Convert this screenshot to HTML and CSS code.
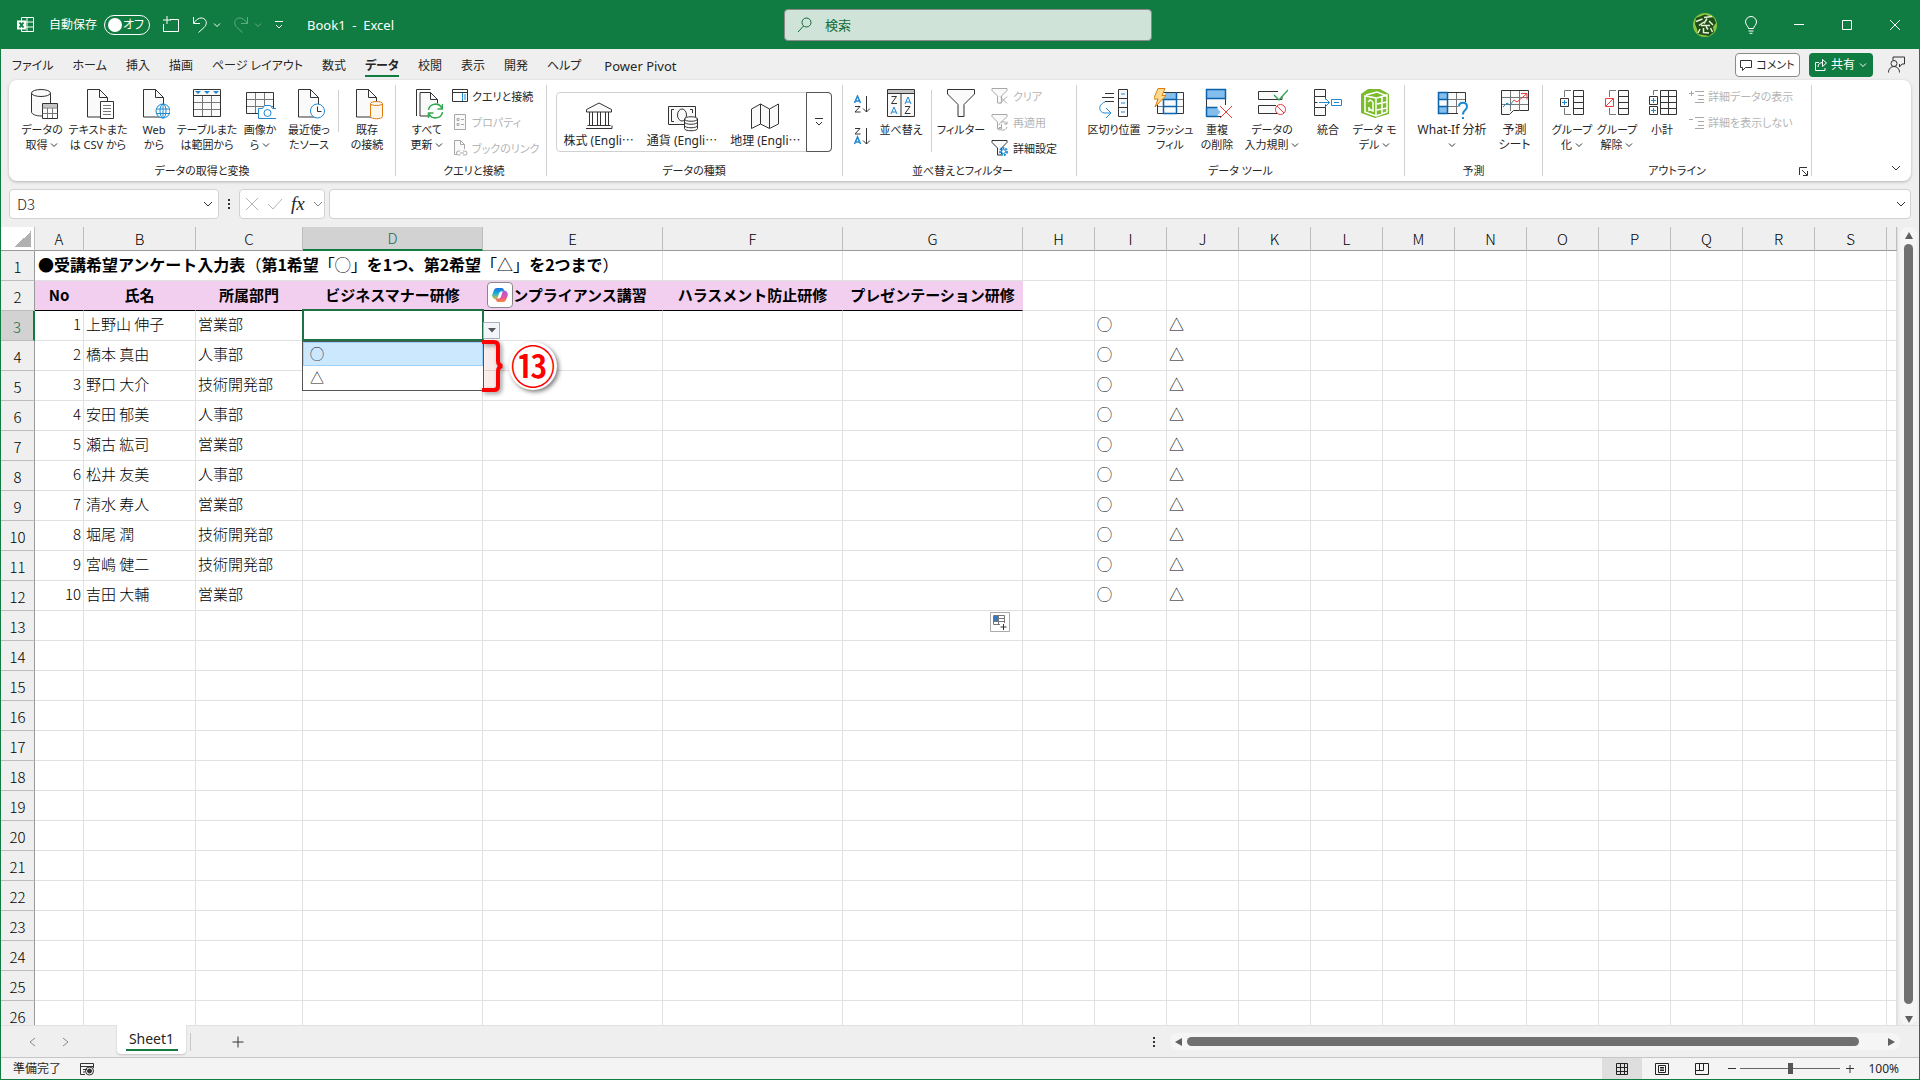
FILE: index.html
```
<!DOCTYPE html>
<html lang="ja">
<head>
  <meta charset="UTF-8">
  <title>Book1 - Excel</title>
  <link rel="stylesheet" href="styles.css">
</head>
<body>

<svg class="sprite" aria-hidden="true">
  <symbol id="chev" viewBox="0 0 8 6"><path d="M1 1.500l3 3 3-3"/></symbol>
  <symbol id="page" viewBox="0 0 32 32"><path class="paper" d="M5.500 1.500h12l8 8v19.500h-20z"/><path d="M17.500 1.500v8h8"/></symbol>
  <symbol id="funnel" viewBox="0 0 18 18"><path class="paper" d="M1 1.500h15v2l-5.500 5.500v7h-4v-7l-5.500-5.500z"/></symbol>
</svg>

<div class="window">

  <header class="titlebar">
    <div class="title-left">
      <svg class="app-icon" width="18" height="18" viewBox="0 0 18 18"><path class="w" d="M4.500 1.500h12v14h-12zM10 1.500v14M4.500 6h12M4.500 11h12"/><path class="wf" d="M0 4.500h9v9H0z"/><path class="g" d="M2.500 6.500l4 5M6.500 6.500l-4 5"/></svg>
      <label class="autosave">自動保存 <span class="switch"><input type="checkbox" role="switch"><i></i><b>オフ</b></span></label>
      <button class="tbtn save" aria-label="保存"><svg width="18" height="18" viewBox="0 0 18 18"><path class="w" d="M8 3.500h8.500v12h-15V8M5 0v8M1 4h8"/></svg></button>
      <button class="tbtn" aria-label="元に戻す"><svg width="16" height="18" viewBox="0 0 16 18"><path class="w" d="M1.500 1v6.500h6.500M2 7c3-5 8-6.500 11-3.500 2.500 3 1 6-1 8l-5.500 5"/></svg><svg class="chev" width="8" height="6"><use href="#chev"/></svg></button>
      <button class="tbtn dim" aria-label="やり直し"><svg width="16" height="18" viewBox="0 0 16 18"><path class="w" d="M14.500 1v6.500h-6.500M14 7c-3-5-8-6.500-11-3.500-2.500 3-1 6 1 8l5.500 5"/></svg><svg class="chev" width="8" height="6"><use href="#chev"/></svg></button>
      <button class="tbtn" aria-label="クイック アクセス"><svg width="10" height="10" viewBox="0 0 10 10"><path class="w" d="M1 1.500h8M2 5l3 3 3-3"/></svg></button>
      <span class="doc-name">Book1&nbsp; -&nbsp; Excel</span>
    </div>
    <div class="search">
      <svg width="16" height="16" viewBox="0 0 16 16"><circle cx="9.500" cy="5.500" r="4.500"/><path d="M6.500 9L1 15"/></svg>
      <input type="text" placeholder="検索" aria-label="検索">
    </div>
    <div class="title-right">
      <svg class="avatar" width="24" height="24" viewBox="0 0 24 24"><circle cx="12" cy="12" r="12" fill="#8cc63f"/><path d="M3 5l9-3.500L21 5l2 5-3 4 1 5-5 4-6-1-5-1-1-5-2-5z" fill="#1f4d1a"/><path d="M3 8.500L9.500 6M11 4.500l8-1M11 9l-5 3.500M8 12.500h9M14 5.500l-3 5M16 8l4 4M7 16l-2 4M10.500 15v4.500l5.500.5M13 13.500l2 3M17.500 15l2 4" fill="none" stroke="#e6f2d8" stroke-width="1.500"/></svg>
      <button aria-label="ヒント"><svg width="14" height="18" viewBox="0 0 14 18"><path class="w" d="M4.500 12.500c0-2-3-3.500-3-6.500a5.500 5.500 0 0 1 11 0c0 3-3 4.500-3 6.500zM4.500 15h5M5.500 17.300h3"/></svg></button>
      <button aria-label="最小化"><svg width="12" height="12" viewBox="0 0 12 12"><path class="w" d="M1 5.500h10"/></svg></button>
      <button aria-label="最大化"><svg width="12" height="12" viewBox="0 0 12 12"><path class="w" d="M1.500 1.500h9v9h-9z"/></svg></button>
      <button aria-label="閉じる"><svg width="12" height="12" viewBox="0 0 12 12"><path class="w" d="M1 1l10 10M11 1L1 11"/></svg></button>
    </div>
  </header>

  <nav class="tabs">
    <a href="#">ファイル</a>
    <a href="#">ホーム</a>
    <a href="#">挿入</a>
    <a href="#">描画</a>
    <a href="#">ページ レイアウト</a>
    <a href="#">数式</a>
    <a href="#" class="active">データ</a>
    <a href="#">校閲</a>
    <a href="#">表示</a>
    <a href="#">開発</a>
    <a href="#">ヘルプ</a>
    <a href="#" class="latin">Power Pivot</a>
    <div class="tabs-right">
      <button class="comment"><svg width="12" height="12" viewBox="0 0 12 12"><path d="M.5 1.500h11v7h-6l-3 3v-3h-2z"/></svg>コメント</button>
      <button class="share"><svg width="12" height="12" viewBox="0 0 12 12"><path d="M4 3.500H.5v8h9.500V9M3 8c0-3 2-4.500 5-4.500M7.500.5l4 3.500-4 3.500z"/></svg>共有<svg class="chev" width="8" height="6"><use href="#chev"/></svg></button>
      <button class="person" aria-label="プレゼンス"><svg width="17" height="17" viewBox="0 0 17 17"><path d="M5 4.500V1h11.500v7H14l-2.500 3V8"/><circle cx="6" cy="7.500" r="3"/><path d="M.5 16.500c0-8 11-8 11 0"/></svg></button>
    </div>
  </nav>

  <section class="ribbon">
    <div class="group get-data">
      <div class="tools">
        <button class="tool"><svg class="ico" viewBox="0 0 32 32"><path class="paper" d="M5.500 5v19c0 2 4 4 10 4h9V5"/><ellipse class="paper" cx="15" cy="5" rx="9.500" ry="3.500"/><path class="white" d="M16.500 15.500h15v15h-15z"/><path class="greyf" d="M17 16h14v3.500h-14z"/><path class="thin" d="M16.500 20h15M16.500 25.500h15M21.500 20v10M26.500 20v10"/></svg>データの<br>取得 <svg class="chev" width="8" height="6"><use href="#chev"/></svg></button>
        <button class="tool"><svg class="ico" viewBox="0 0 32 32"><use href="#page"/><path class="white" d="M18.500 13.500h13v17h-13z"/><path class="thin" d="M21 17.500h8M21 20.500h8M21 23.500h8M21 26.500h8"/></svg>テキストまた<br>は CSV から</button>
        <button class="tool"><svg class="ico" viewBox="0 0 32 32"><use href="#page"/><circle class="wblue" cx="25" cy="23" r="7"/><ellipse class="blue" cx="25" cy="23" rx="3" ry="7"/><path class="blue" d="M18 21h14M18 25.500h14M25 16v14"/></svg>Web<br>から</button>
        <button class="tool"><svg class="ico" viewBox="0 0 32 32"><path class="paper" d="M2.500 1.500h27v27h-27z"/><path class="thin" d="M11.500 7v21M20.500 7v21M3 14.500h26M3 21.500h26"/><path d="M2.500 7.500h27"/><path class="bluef" d="M4 3h6l-3 3zM13 3h6l-3 3zM22 3h6l-3 3z"/></svg>テーブルまた<br>は範囲から</button>
        <button class="tool"><svg class="ico" viewBox="0 0 32 32"><path class="paper" d="M2.500 4.500h27v21h-27z"/><path class="thin" d="M11.500 5v20M20.500 5v20M3 11.500h26M3 18.500h26"/><path class="wblue" d="M14.500 20.500h4l2-3h6l2 3h4v10h-18z"/><circle class="blue" cx="23.500" cy="25" r="3.500"/></svg>画像か<br>ら <svg class="chev" width="8" height="6"><use href="#chev"/></svg></button>
        <button class="tool"><svg class="ico" viewBox="0 0 32 32"><use href="#page"/><circle class="wblue" cx="24.500" cy="23" r="7"/><path d="M24.500 18.500v5h4"/></svg>最近使っ<br>たソース</button>
        <i class="bar"></i>
        <button class="tool"><svg class="ico" viewBox="0 0 32 32"><use href="#page"/><path class="orange" d="M19.500 16v12.500c0 3 12 3 12 0V16"/><ellipse class="orange" cx="25.500" cy="15.500" rx="6" ry="2"/></svg>既存<br>の接続</button>
      </div>
      <h2>データの取得と変換</h2>
    </div>

    <div class="group queries">
      <div class="tools">
        <button class="tool"><svg class="ico" viewBox="0 0 32 32"><path d="M5.500 28V1.500h14"/><path class="paper" d="M9 4.500h10.500l7 7V28H9z"/><path d="M19.500 4.500v7h7"/><circle cx="24.500" cy="23" r="8" class="nos"/><path class="green" d="M17.500 22c1-7 11-8 13.500-1.500M31.500 16v5h-5M31.500 24c-1 7-11 8-13.500 1.500M17.500 30v-5h5"/></svg>すべて<br>更新 <svg class="chev" width="8" height="6"><use href="#chev"/></svg></button>
        <div class="stack">
          <button><svg width="16" height="16" viewBox="0 0 16 16"><path class="white" d="M.5 1.500h15v12H.5zM.5 4.500h15"/><path class="blue" d="M10.500 5v8M12 7h2M12 9h2M12 11h2"/></svg>クエリと接続</button>
          <button disabled><svg width="16" height="16" viewBox="0 0 16 16"><path class="paper" d="M2.500.5h11v15h-11z"/><path d="M5 4.500h2v2H5zM9 5.500h3M5 9.500h2v2H5zM9 10.500h3"/></svg>プロパティ</button>
          <button disabled><svg width="16" height="16" viewBox="0 0 16 16"><path class="paper" d="M5 14.500H2.500V.5h6l4 4V9M8.500.5v4h4"/><path d="M8 11H6.500a2 2 0 0 0 0 4h2M11 11h2a2 2 0 0 1 0 4h-2M8 13h4"/></svg>ブックのリンク</button>
        </div>
      </div>
      <h2>クエリと接続</h2>
    </div>

    <div class="group types">
      <div class="tools">
        <div class="gallery">
          <button><svg class="ico" viewBox="0 0 32 32"><path class="paper" d="M3.500 11v-2.500L16 2l12.500 6.500V11zM4.500 24.500h23M3 27.500h26v-3"/><path d="M6.500 11v13M9.500 11v13M14.500 11v13M17.500 11v13M22.500 11v13M25.500 11v13"/></svg>株式 (Engli⋯</button>
          <button><svg class="ico" viewBox="0 0 32 32"><path class="paper" d="M2.500 5.500h27v18h-27z"/><path d="M8 8.500H5.500v12H8M24 8.500h2.500V12"/><ellipse cx="16" cy="14" rx="4.500" ry="6"/><path class="white" d="M18.500 18v9.500c0 3 13 3 13 0V18c0-3-13-3-13 0M18.500 18c0 3 13 3 13 0M18.500 21c0 3 13 3 13 0M18.500 24.500c0 3 13 3 13 0"/></svg>通貨 (Engli⋯</button>
          <button><svg class="ico" viewBox="0 0 32 32"><path class="paper" d="M2.500 8l9-5 9 5 9-5v20l-9 4.500-9-4.500-9 4.500zM11.500 3v20M20.500 8v19"/></svg>地理 (Engli⋯</button>
          <button class="more" aria-label="その他"><svg width="8" height="10" viewBox="0 0 8 10"><path d="M0 1.500h8M1 5l3 3 3-3"/></svg></button>
        </div>
      </div>
      <h2>データの種類</h2>
    </div>

    <div class="group sorting">
      <div class="tools">
        <div class="sorts">
          <button aria-label="昇順"><svg width="18" height="18" viewBox="0 0 18 18"><path class="blue b2" d="M1.500 8l3-7 3 7M2.500 6h4"/><path d="M2 11.500h5L2 17h5.500M13.500 1v16M10 13.500l3.500 3.500 3.500-3.500"/></svg></button>
          <button aria-label="降順"><svg width="18" height="18" viewBox="0 0 18 18"><path class="blue b2" d="M1.500 17l3-7 3 7M2.500 15h4"/><path d="M2 1.500h5L2 7h5.500M13.500 1v16M10 13.500l3.500 3.500 3.500-3.500"/></svg></button>
        </div>
        <button class="tool"><svg class="ico" viewBox="0 0 32 32"><path class="paper" d="M2.500 1.500h27v27h-27z"/><path class="greyf" d="M3 2h26v3.500H3z"/><path d="M2.500 5.500h27M16 5.500v23M6.500 8.500h5l-5 7h5.500M20 18.500h5l-5 7h5.500"/><path class="blue" d="M6 26l3-7 3 7M7 24h4M20 16l3-7 3 7M21 14h4"/></svg>並べ替え</button>
        <i class="bar long"></i>
        <button class="tool"><svg class="ico" viewBox="0 0 32 32"><path class="paper" d="M2.500 1.500h27V6L19 16.500v12h-6v-12L2.500 6z"/></svg>フィルター</button>
        <div class="stack">
          <button disabled><svg width="18" height="18" viewBox="0 0 18 18"><use href="#funnel"/><path d="M9 9.500l7 7M16 9.500l-7 7"/></svg>クリア</button>
          <button disabled><svg width="18" height="18" viewBox="0 0 18 18"><use href="#funnel"/><path class="white" d="M8 12c1-4 7-4 8-1V8.500M16 11h-3M16 14c-1 4-7 4-8 1v2.500M8 14.500h3"/></svg>再適用</button>
          <button><svg width="18" height="18" viewBox="0 0 18 18"><use href="#funnel"/><circle class="gear" cx="12.500" cy="12.500" r="3.500"/><circle class="wblue" cx="12.500" cy="12.500" r="2"/></svg>詳細設定</button>
        </div>
      </div>
      <h2>並べ替えとフィルター</h2>
    </div>

    <div class="group datatools">
      <div class="tools">
        <button class="tool"><svg class="ico" viewBox="0 0 32 32"><path class="paper" d="M20.500 1.500h9v27h-9zM20.500 10.500h9M20.500 19.500h9"/><path d="M7 5.500h9M4 9.500h12M7 13.500h9"/><path class="blue" d="M7 14c-8 3-6 11 0 11h5M8 20l5 5-5 5M23 6h4M23 15h4M23 24h4"/></svg>区切り位置</button>
        <button class="tool"><svg class="ico" viewBox="0 0 32 32"><path class="paper" d="M3.500 4.500h26v21h-26z"/><path class="thin" d="M22.500 5v20M4 11.500h25M4 18.500h25"/><path class="bfill" d="M11.500 5h11v6.500h-13z"/><path class="dblue" d="M9.500 11.500h13v14h-13zM9.500 18.500h13M22.500 4.500v7"/><path class="bolt" d="M4 .5h7l-3 7h4L1 19l3-8H-.5z"/></svg>フラッシュ<br>フィル</button>
        <button class="tool"><svg class="ico" viewBox="0 0 32 32"><path class="paper" d="M5.500 1.500h19v27h-19z"/><path class="bfill" d="M5.500 1.500h19v9h-19zM5.500 19.500h10l4 4.500-4 4.500h-10z"/><path class="dblue" d="M5.500 1.500h19v9h-19zM5.500 28.500v-9h11M5.500 28.500h12"/><path class="nos" d="M21 17h12v13H21z"/><path class="red" d="M19 18l12 12M31 18L19 30"/></svg>重複<br>の削除</button>
        <button class="tool"><svg class="ico" viewBox="0 0 32 32"><path class="paper" d="M22 3.500H2.500v8H26V8M20 17.500H2.500v8H22"/><path class="green" d="M18 7l5 5 9-10"/><circle class="red wf" cx="24.500" cy="21.500" r="5"/><path class="red" d="M21 18l7 7"/></svg>データの<br>入力規則 <svg class="chev" width="8" height="6"><use href="#chev"/></svg></button>
        <button class="tool"><svg class="ico" viewBox="0 0 32 32"><path class="paper" d="M2.500 1.500h11v7h-11zM2.500 8.500v11M2.500 19.500h11v8h-11zM13.500 8.500v3M13.500 19.500v-3M2.500 14.500h3"/><path class="blue" d="M7 14.500h10M13 10l4.500 4.500L13 19M19.500 11.500h10v6h-10zM22 14.500h5"/></svg>統合</button>
        <button class="tool"><svg class="ico" viewBox="0 0 32 32"><path class="lime" d="M2 6l7-5h12l9 5v20l-14 4L2 25z"/><path class="wl" d="M7 7l11-3 10 4M6 8v16l11 4V10zM18 10l10-3v17l-11 4M18 16l10-2M18 22l10-2M23 9v17M9 14l2-2 3 2M14 14v9l-4-2M10 19v4"/></svg>データ モ<br>デル <svg class="chev" width="8" height="6"><use href="#chev"/></svg></button>
      </div>
      <h2>データ ツール</h2>
    </div>

    <div class="group forecast">
      <div class="tools">
        <button class="tool"><svg class="ico" viewBox="0 0 32 32"><path class="paper" d="M2.500 4.500h27v21h-27z"/><path class="thin" d="M20.500 5v20M3 11.500h26M3 18.500h26"/><path class="bfill" d="M2.500 4.500h9v7h-9zM2.500 18.500h9v7h-9z"/><path class="dblue" d="M2.500 4.500h9v21h-9zM2.500 11.500h9M2.500 18.500h9"/><path class="nos" d="M22 14h10v17H22z"/><path class="blue b2" d="M23 18.500c0-5 8-5 8 0 0 4-4 3-4 8M27 29v2"/></svg>What-If 分析<br><svg class="chev" width="8" height="6"><use href="#chev"/></svg></button>
        <button class="tool"><svg class="ico" viewBox="0 0 32 32"><path class="paper" d="M2.500 2.500h27v20h-15l-4 4h-8z"/><path class="thin" d="M11.500 3v20M20.500 3v20M3 9.500h26M3 16.500h26"/><path class="blue" d="M4 19l4-4 3 2 4-5"/><path class="red" d="M15 12l3 2 10-8.500M22 5.500h6v6"/></svg>予測<br>シート</button>
      </div>
      <h2>予測</h2>
    </div>

    <div class="group outline">
      <div class="tools">
        <button class="tool"><svg class="ico" viewBox="0 0 32 32"><path class="paper" d="M17.500 2.500h10v24h-10z"/><path d="M17.500 8.500h10M17.500 14.500h10M17.500 20.500h10"/><path class="thin" d="M15 2.500H8.500V9M8.500 20v6.500H15"/><path class="white" d="M4.500 10.500h8v8h-8z"/><path class="blue" d="M8.500 12v5M6 14.500h5"/></svg>グループ<br>化 <svg class="chev" width="8" height="6"><use href="#chev"/></svg></button>
        <button class="tool"><svg class="ico" viewBox="0 0 32 32"><path class="paper" d="M17.500 2.500h10v24h-10z"/><path d="M17.500 8.500h10M17.500 14.500h10M17.500 20.500h10"/><path class="thin" d="M15 2.500H8.500V9M8.500 20v6.500H15"/><path class="red" d="M4.500 10.500h8v8h-8zM5 18l7-7"/></svg>グループ<br>解除 <svg class="chev" width="8" height="6"><use href="#chev"/></svg></button>
        <button class="tool"><svg class="ico" viewBox="0 0 32 32"><path class="paper" d="M14.500 2.500h16v24h-16z"/><path d="M14.500 8.500h16M14.500 14.500h16M14.500 20.500h16M22.500 2.500v24"/><path class="thin" d="M12 2.500H7.500V7"/><path class="white" d="M3.500 8.500h8v8h-8zM3.500 18.500h8v8h-8z"/><path class="blue" d="M7.500 10v5M5 12.500h5M7.500 20v5M5 22.500h5"/></svg>小計</button>
        <div class="stack">
          <button disabled><svg width="15" height="14" viewBox="0 0 15 14"><path d="M0 4.500h5M2.500 2v5M6 2.500h9M9 6.500h6M9 10.500h6M6 13.500h9"/></svg>詳細データの表示</button>
          <button disabled><svg width="15" height="14" viewBox="0 0 15 14"><path d="M0 4.500h4M6 2.500h9M9 6.500h6M9 10.500h6M6 13.500h9"/></svg>詳細を表示しない</button>
        </div>
      </div>
      <h2>アウトライン</h2>
      <button class="launch" aria-label="アウトラインの設定"><svg width="9" height="9" viewBox="0 0 9 9"><path d="M.5 8V.5H8M3 3l5 5M8.500 4v4.500H4"/></svg></button>
    </div>

    <button class="collapse" aria-label="リボンを折りたたむ"><svg width="10" height="7" viewBox="0 0 10 7"><path d="M1 1l4 4 4-4"/></svg></button>
  </section>

  <div class="formula-row">
    <div class="namebox"><input type="text" value="D3" aria-label="名前ボックス"><svg width="10" height="7" viewBox="0 0 10 7"><path d="M1 1l4 4 4-4"/></svg></div>
    <svg class="dots" width="4" height="12" viewBox="0 0 4 12"><path d="M1 1h2v2H1zM1 5h2v2H1zM1 9h2v2H1z"/></svg>
    <div class="fx">
      <button disabled aria-label="キャンセル"><svg width="14" height="14" viewBox="0 0 14 14"><path d="M1 1l12 12M13 1L1 13"/></svg></button>
      <button disabled aria-label="入力"><svg width="16" height="14" viewBox="0 0 16 14"><path d="M1 7l5 5L15 2"/></svg></button>
      <button class="fn">fx</button>
      <svg width="10" height="7" viewBox="0 0 10 7"><path d="M1 1l4 4 4-4"/></svg>
    </div>
    <div class="formula"><input type="text" aria-label="数式バー"><svg width="10" height="7" viewBox="0 0 10 7"><path d="M1 1l4 4 4-4"/></svg></div>
  </div>

  <main class="sheet">
    <div class="cells">
      <table class="grid">
        <colgroup>
          <col class="c-head"><col class="c-a"><col class="c-b"><col class="c-c">
          <col class="c-wide" span="4">
          <col class="c-std" span="12">
          <col>
        </colgroup>
        <thead><tr></tr></thead>
        <tbody></tbody>
      </table>

      <div class="selection"></div>
      <button class="dd-arrow" aria-label="リストを開く"><svg width="8" height="5" viewBox="0 0 8 5"><path d="M0 0h8L4 4.500z"/></svg></button>
      <ul class="dd-list" role="listbox" aria-label="ビジネスマナー研修">
        <li role="option" aria-selected="true">◯</li>
        <li role="option">△</li>
      </ul>
      <button class="copilot" aria-label="Copilot">
        <svg width="16" height="16" viewBox="0 0 16 16">
          <defs>
            <linearGradient id="cp1" x2="0" y2="1"><stop offset="0" stop-color="#1a6fe0"/><stop offset=".5" stop-color="#19b5d8"/><stop offset="1" stop-color="#f5c518"/></linearGradient>
            <linearGradient id="cp2" x2="0" y2="1"><stop offset="0" stop-color="#a45ee5"/><stop offset=".6" stop-color="#e8559b"/><stop offset="1" stop-color="#f68a3c"/></linearGradient>
          </defs>
          <path fill="url(#cp1)" d="M5 1h5c2 0 1.500 3 3 3.500H9C8 4.500 7 6 6.500 8S5 13 3.500 12.500C1 12-.5 9.500.5 7L2 3c.5-1.300 1.500-2 3-2z"/>
          <path fill="url(#cp2)" d="M11 15H6c-2 0-1.500-3-3-3.500h4c1 0 2-1.500 2.500-3.500S11 3 12.500 3.500C15 4 16.500 6.500 15.500 9L14 13c-.5 1.300-1.500 2-3 2z"/>
        </svg>
      </button>
      <svg class="bracket" width="24" height="54" viewBox="0 0 24 54"><path class="tint" d="M2 3h16v48H2z"/><path class="line" d="M1 3h12q4 0 4 4v15q0 4 4 5-4 1-4 5v15q0 4-4 4H1"/></svg>
      <span class="callout">⑬</span>
      <button class="autofill" aria-label="オートフィル オプション"><svg width="20" height="20" viewBox="0 0 20 20"><path class="box" d="M.5.5h19v19H.5z"/><path class="thin" d="M3.500 3.500h11v9h-11zM3.500 6.500h11M3.500 9.500h11M8.500 3.500v9"/><path class="fill" d="M4 4h4v5H4z"/><path class="nos" d="M10 11h7v7h-7z"/><path d="M13.500 12v6M10.500 15h6"/></svg></button>
    </div>
    <div class="vscroll"><i class="up"></i><i class="thumb"></i><i class="down"></i></div>
  </main>

  <div class="sheetbar">
    <button class="nav" aria-label="前のシート"><svg width="7" height="10" viewBox="0 0 7 10"><path d="M6 1L1 5l5 4"/></svg></button>
    <button class="nav" aria-label="次のシート"><svg width="7" height="10" viewBox="0 0 7 10"><path d="M1 1l5 4-5 4"/></svg></button>
    <a href="#" class="sheet-tab"><span>Sheet1</span></a>
    <button class="add" aria-label="新しいシート"><svg width="12" height="12" viewBox="0 0 12 12"><path d="M6 .5v11M.5 6h11"/></svg></button>
    <svg class="dots" width="4" height="12" viewBox="0 0 4 12"><path d="M1 1h2v2H1zM1 5h2v2H1zM1 9h2v2H1z"/></svg>
    <div class="hscroll"><i class="left"></i><i class="thumb"></i><i class="right"></i></div>
  </div>

  <footer class="status">
    <span>準備完了</span>
    <svg width="15" height="14" viewBox="0 0 15 14"><path d="M5 12.500H.5v-11h13V6M.5 4.500h13M3 7.500h4M3 10h2"/><circle cx="9.500" cy="9" r="4"/><circle class="dot" cx="9.500" cy="9" r="2"/></svg>
    <div class="views">
      <button class="on" aria-label="標準"><svg width="14" height="14" viewBox="0 0 14 14"><path d="M1.500 1.500h11v11h-11zM5.500 1v12M9.500 1v12M1.500 5.500h11M1.500 9.500h11"/></svg></button>
      <button aria-label="ページ レイアウト"><svg width="14" height="14" viewBox="0 0 14 14"><path d="M.5 1.500h13v11H.5zM3.500 3.500h7v7h-7zM5 5.500h4M5 7h4M5 8.500h4"/></svg></button>
      <button aria-label="改ページ プレビュー"><svg width="14" height="14" viewBox="0 0 14 14"><path d="M.5 1.500h13v11H.5zM.5 8.500h8v-7M4.500 1.500v7"/></svg></button>
    </div>
    <button class="zoom" aria-label="縮小"><svg width="8" height="8" viewBox="0 0 8 8"><path d="M0 3.500h8"/></svg></button>
    <input class="slider" type="range" min="10" max="190" value="100" aria-label="ズーム">
    <button class="zoom" aria-label="拡大"><svg width="8" height="8" viewBox="0 0 8 8"><path d="M0 3.500h8M4 0v8"/></svg></button>
    <span class="percent">100%</span>
  </footer>

</div>

<script src="script.js"></script>
</body>
</html>
```
FILE: styles.css
```
* {
  box-sizing: border-box;
  margin: 0;
  padding: 0;
}

body {
  font: 12px/16px "Noto Sans", "Noto Sans CJK JP", sans-serif;
  color: #262626;
  font-feature-settings: "palt";
}

button,
input {
  font: inherit;
  font-feature-settings: inherit;
  color: inherit;
  border: 0;
  background: none;
  outline: 0;
}

a {
  color: inherit;
  text-decoration: none;
}

svg {
  fill: none;
  stroke: #333;
  flex: none;
}

.sprite {
  position: absolute;
  width: 0;
  height: 0;
}

.window {
  height: 100vh;
  display: flex;
  flex-direction: column;
  background: #efefef;
  border: 1px solid #107c41;
  border-top: 0;
  overflow: hidden;
}

/* title bar */
.titlebar {
  height: 49px;
  flex: none;
  background: #107c41;
  color: #fff;
  display: grid;
  grid-template-columns: 1fr 368px 1fr;
  align-items: center;
  padding: 1px 0 0 16px;
}

.w {
  stroke: #fff;
}

.wf {
  fill: #fff;
}

.titlebar .chev {
  stroke: #fff;
}

.title-left {
  display: flex;
  align-items: center;
}

.app-icon .wf {
  stroke: none;
}

.app-icon .g {
  stroke: #107c41;
  stroke-width: 2;
}

.autosave {
  display: flex;
  align-items: center;
  gap: 7px;
  margin: 0 12px 0 14px;
}

.switch {
  width: 46px;
  height: 20px;
  border: 1px solid #fff;
  border-radius: 10px;
  display: flex;
  align-items: center;
  justify-content: space-between;
  padding: 0 5px 0 2px;
}

.switch input {
  appearance: none;
  width: 0;
}

.switch i {
  width: 14px;
  height: 14px;
  border-radius: 50%;
  background: #fff;
}

.switch b {
  font-weight: 400;
  line-height: 16px;
}

.tbtn {
  display: flex;
  align-items: center;
  gap: 5px;
  margin-right: 12px;
}

.dim {
  opacity: .35;
}

.doc-name {
  font-size: 13px;
  margin-left: 11px;
}

.search {
  height: 32px;
  background: #cfe3d8;
  border: 1px solid #8a8a8a;
  border-radius: 4px;
  display: flex;
  align-items: center;
  gap: 12px;
  padding: 0 12px;
}

.search svg {
  stroke: #0e6b38;
}

.search input {
  flex: 1;
  font-size: 13px;
}

.search input::placeholder {
  color: #0e6b38;
  opacity: 1;
}

.title-right {
  display: flex;
  align-items: center;
  justify-content: flex-end;
}

.title-right button {
  width: 48px;
  height: 40px;
  display: flex;
  align-items: center;
  justify-content: center;
}

.avatar {
  stroke: none;
  margin-right: 10px;
}

/* ribbon tabs */
.tabs {
  height: 31px;
  flex: none;
  display: flex;
  align-items: center;
  gap: 19px;
  padding: 0 14px 0 11px;
  white-space: nowrap;
}

.tabs a {
  height: 24px;
  padding-top: 5px;
  border-bottom: 2px solid transparent;
}

.tabs .active {
  font-weight: 700;
  border-color: #107c41;
}

.tabs .latin {
  font-size: 13px;
  margin-left: 4px;
}

.tabs-right {
  margin-left: auto;
  display: flex;
  align-items: center;
  gap: 9px;
}

.tabs-right button {
  height: 24px;
  display: flex;
  align-items: center;
  justify-content: center;
  gap: 4px;
  border-radius: 4px;
}

.tabs-right .comment {
  width: 65px;
  border: 1px solid #8a8a8a;
  background: #fff;
  font-size: 11px;
}

.tabs-right .share {
  width: 64px;
  background: #107c41;
  color: #fff;
}

.share svg {
  stroke: #fff;
}

.person {
  margin-left: 6px;
}

/* ribbon */
.ribbon {
  height: 101px;
  flex: none;
  margin: 0 8px;
  background: #fff;
  border-radius: 8px;
  box-shadow: 0 1px 3px rgba(0, 0, 0, .25);
  display: flex;
  align-items: flex-start;
  font-size: 11px;
  line-height: 15px;
  white-space: nowrap;
}

.group {
  height: 91px;
  margin-top: 5px;
  padding: 3px 6px 0;
  border-right: 1px solid #d0d0d0;
  position: relative;
}

.group h2 {
  font-size: 11px;
  line-height: 14px;
  font-weight: 400;
  text-align: center;
}

.tools {
  display: grid;
  height: 76px;
  align-items: start;
}

.get-data .tools {
  grid-template-columns: 54px 58px 54px 52px 54px 44px 14px 44px;
}

.queries {
  padding-right: 0;
}

.queries .tools {
  grid-template-columns: 50px 94px;
}

.types {
  padding: 3px 10px 0 9px;
}

.sorting {
  padding-right: 0;
}

.sorting .tools {
  grid-template-columns: 26px 52px 8px 52px 89px;
}

.datatools .tools {
  grid-template-columns: 62px 50px 44px 66px 46px 47px;
}

.forecast .tools {
  grid-template-columns: 82px 43px;
  font-size: 12px;
}

.outline .tools {
  grid-template-columns: 46px 44px 46px 120px;
}

.tool {
  display: block;
  justify-self: stretch;
  margin: 0 -10px;
  line-height: 15px;
}

.ico {
  display: block;
  width: 32px;
  height: 32px;
  margin: 0 auto 2px;
}

.chev {
  vertical-align: 1px;
}

.paper {
  fill: #fafafa;
}

.white {
  fill: #fff;
}

.greyf {
  fill: #c4c4c4;
  stroke: none;
}

.thin {
  stroke: #777;
}

.blue,
.wblue {
  stroke: #1e88d2;
}

.wblue {
  fill: #fff;
}

.b2 {
  stroke-width: 2;
}

.sorts .b2 {
  stroke-width: 1.5;
}

.bluef {
  fill: #1e88d2;
  stroke: none;
}

.bfill {
  fill: #83beec;
  stroke: none;
}

.dblue {
  stroke: #0b62ad;
  stroke-width: 1.5;
}

.green {
  stroke: #35a853;
  stroke-width: 1.5;
}

.red {
  stroke: #eb3b3b;
}

.orange {
  stroke: #e07b10;
  fill: #fdf6ec;
}

.bolt {
  stroke: #e07b10;
  fill: #fbdc8e;
}

.nos {
  stroke: none;
  fill: #fff;
}

.lime {
  fill: #7cbb2d;
  stroke: none;
}

.wl {
  stroke: #fff;
  stroke-width: 1.5;
}

.gear {
  stroke: #1e88d2;
  stroke-width: 2;
  stroke-dasharray: 2 1;
}

.bar {
  width: 1px;
  height: 42px;
  margin-top: 2px;
  background: #d0d0d0;
  justify-self: center;
}

.bar.long {
  height: 62px;
}

.stack {
  display: grid;
  gap: 10px;
  padding-left: 4px;
}

.queries .stack {
  padding-left: 0;
}

.stack button {
  display: flex;
  align-items: center;
  gap: 4px;
  height: 16px;
}

.stack button:disabled {
  color: #b5b5b5;
}

.stack button:disabled svg {
  stroke: #a8a8a8;
}

.gallery {
  width: 276px;
  height: 60px;
  margin-top: 4px;
  border: 1px solid #d0d0d0;
  border-radius: 4px;
  display: grid;
  grid-template-columns: 1fr 1fr 1fr 24px;
  font-size: 12px;
}

.gallery .ico {
  margin: 5px auto 0;
}

.gallery .more {
  margin: -1px;
  border: 1px solid #555;
  border-radius: 0 4px 4px 0;
}

.sorts {
  display: grid;
  gap: 14px;
  padding-top: 7px;
}

.sorts button {
  height: 18px;
  text-align: left;
  padding-left: 4px;
}

.launch {
  position: absolute;
  right: 3px;
  bottom: 0;
  line-height: 9px;
}

.collapse {
  margin: 80px 10px 0 auto;
}

/* formula bar */
.formula-row {
  flex: none;
  height: 30px;
  margin: 8px;
  display: flex;
  align-items: center;
}

.namebox,
.fx,
.formula {
  height: 30px;
  background: #fff;
  border: 1px solid #d2d2d2;
  border-radius: 4px;
  display: flex;
  align-items: center;
}

.namebox {
  width: 210px;
  padding: 0 5px 0 7px;
}

.namebox input,
.formula input {
  flex: 1;
  min-width: 0;
  font: 300 15px/20px "Noto Sans CJK JP", sans-serif;
}

.dots {
  margin: 0 8px;
  fill: #333;
  stroke: none;
}

.fx {
  width: 86px;
  padding: 0 1px 0 5px;
  gap: 8px;
}

.fx button,
.fx svg {
  display: block;
}

.fx svg {
  stroke: #888;
}

.fx button:disabled svg {
  stroke: #b5b5b5;
}

.fx .fn {
  font: italic 400 19px/20px "Liberation Serif", serif;
}

.formula {
  flex: 1;
  margin-left: 4px;
  padding: 0 4px 0 7px;
}

/* worksheet */
.sheet {
  flex: 1;
  min-height: 0;
  display: flex;
}

.cells {
  flex: 1;
  min-width: 0;
  overflow: hidden;
  position: relative;
  border-right: 1px solid #e1e1e1;
}

.grid {
  width: 100%;
  table-layout: fixed;
  border-spacing: 0;
  font: 300 15px/20px "Noto Sans CJK JP", sans-serif;
  font-feature-settings: normal;
  color: #000;
  background: #fff;
}

.c-head {
  width: 34px;
}

.c-a {
  width: 49px;
}

.c-b {
  width: 112px;
}

.c-c {
  width: 107px;
}

.c-wide {
  width: 180px;
}

.c-std {
  width: 72px;
}

.grid th {
  background: #efefef;
  font-weight: 300;
  border-right: 1px solid #bdbdbd;
  border-bottom: 1px solid #999;
}

.grid thead th {
  height: 24px;
}

.grid tbody th {
  height: 30px;
  padding-top: 3px;
  line-height: 16px;
  border-right-color: #999;
  border-bottom-color: #bdbdbd;
}

.grid th.cur {
  background: #d2d2d2;
  color: #1e6b45;
}

.grid thead th.cur {
  border-bottom: 2px solid #107c41;
}

.grid tbody th.cur {
  border-right: 2px solid #107c41;
}

.grid thead .corner {
  background: linear-gradient(135deg, transparent 50%, #b1b1b1 50%) no-repeat 14px 4px / 16px 16px;
}

.grid td {
  height: 30px;
  padding: 0 2px 4px;
  border-right: 1px solid #e1e1e1;
  border-bottom: 1px solid #e1e1e1;
  white-space: nowrap;
  overflow: hidden;
}

.grid .num {
  text-align: right;
}

.grid .mark {
  font-weight: 400;
}

.grid .title {
  font-size: 16px;
  font-weight: 700;
  padding-left: 3px;
}

.grid .title i {
  font-style: normal;
  font-weight: 400;
}

.grid .head {
  background: #f2ceef;
  border-right-color: #f2ceef;
  border-bottom-color: #000;
  font-weight: 700;
  text-align: center;
  padding-bottom: 2px;
}

.selection {
  position: absolute;
  left: 301px;
  top: 82px;
  width: 182px;
  height: 32px;
  border: 2px solid #1e7145;
}

.dd-arrow {
  position: absolute;
  left: 482px;
  top: 95px;
  width: 17px;
  height: 17px;
  display: flex;
  align-items: center;
  justify-content: center;
  background: #f2f5fa;
  border: 1px solid #abb2bd;
}

.dd-arrow svg {
  fill: #555;
  stroke: none;
}

.dd-list {
  position: absolute;
  left: 301px;
  top: 114px;
  width: 182px;
  list-style: none;
  background: #fff;
  border: 1px solid #555;
  font: 14px/20px "Noto Sans CJK JP", sans-serif;
}

.dd-list li {
  height: 24px;
  padding-left: 6px;
  border: 1px solid transparent;
}

.dd-list [aria-selected] {
  background: #cce8ff;
  border-color: #99d1ff;
}

.copilot {
  position: absolute;
  left: 486px;
  top: 55px;
  width: 26px;
  height: 26px;
  display: flex;
  align-items: center;
  justify-content: center;
  background: #fff;
  border: 1px solid #888;
  border-radius: 4px;
}

.copilot svg {
  stroke: none;
}

.bracket {
  position: absolute;
  left: 480px;
  top: 112px;
  filter: drop-shadow(2px 2px 2px rgba(0, 0, 0, .4));
}

.bracket .tint {
  fill: rgba(255, 0, 0, .06);
  stroke: none;
}

.bracket .line {
  stroke: #f00;
  stroke-width: 4;
}

.callout {
  position: absolute;
  left: 508px;
  top: 115px;
  width: 48px;
  height: 48px;
  border-radius: 50%;
  background: #fff;
  box-shadow: 2px 2px 4px rgba(0, 0, 0, .5);
  color: #f00;
  font: 500 45px/46px "Noto Sans CJK JP", sans-serif;
  text-align: center;
}

.autofill {
  position: absolute;
  left: 989px;
  top: 385px;
  width: 20px;
  height: 20px;
}

.autofill svg {
  display: block;
}

.autofill .box {
  fill: #fff;
  stroke: #ababab;
}

.autofill .fill {
  fill: #3b78c4;
  stroke: none;
}

/* scroll bars */
.vscroll,
.hscroll {
  background: #f5f5f5;
  border-radius: 8px;
  display: flex;
  align-items: center;
}

.vscroll {
  width: 17px;
  margin: 0 2px 0 2px;
  flex-direction: column;
  padding: 5px 0 2px;
  gap: 5px;
}

.thumb {
  flex: 1;
  background: #707070;
  border-radius: 5px;
}

.vscroll .thumb {
  width: 9px;
}

.up,
.down,
.left,
.right {
  border: 4px solid transparent;
}

.up {
  border-top: 0;
  border-bottom: 7px solid #606060;
}

.down {
  border-bottom: 0;
  border-top: 7px solid #606060;
  margin-top: 7px;
}

.left {
  border-left: 0;
  border-right: 7px solid #606060;
}

.right {
  border-right: 0;
  border-left: 7px solid #606060;
  margin-left: 24px;
}

/* sheet tabs */
.sheetbar {
  height: 32px;
  flex: none;
  border-top: 1px solid #e1e1e1;
  display: flex;
  align-items: center;
  padding: 0 19px 0 28px;
}

.sheetbar svg {
  display: block;
}

.nav {
  margin-right: 26px;
}

.nav svg {
  stroke: #888;
}

.sheet-tab {
  width: 69px;
  height: 29px;
  margin: -1px 4px 0 22px;
  padding-top: 4px;
  align-self: flex-start;
  background: #fff;
  border-radius: 0 0 4px 4px;
  box-shadow: 0 1px 2px rgba(0, 0, 0, .2);
  font-size: 14px;
  text-align: center;
}

.sheet-tab span {
  display: inline-block;
  width: 52px;
  line-height: 20px;
  border-bottom: 2px solid #107c41;
}

.add {
  border-left: 1px solid #c8c8c8;
  padding: 3px 0 3px 41px;
}

.sheetbar .dots {
  margin: 0 14px 0 auto;
}

.hscroll {
  width: 39%;
  height: 17px;
  padding: 0 5px;
  gap: 5px;
}

.hscroll .thumb {
  height: 9px;
}

/* status bar */
.status {
  height: 22px;
  flex: none;
  background: #f4f4f4;
  border-top: 1px solid #c6c6c6;
  display: flex;
  align-items: center;
  padding: 0 20px 0 12px;
}

.status > svg {
  margin-left: 19px;
}

.status .dot {
  fill: #333;
}

.status svg {
  display: block;
}

.views {
  margin-left: auto;
  align-self: stretch;
  display: flex;
}

.views button {
  width: 40px;
  display: flex;
  align-items: center;
  justify-content: center;
}

.views .on {
  background: #dedede;
}

.views svg {
  stroke: #222;
}

.zoom {
  margin: 0 4px 0 6px;
}

.slider {
  appearance: none;
  width: 100px;
  height: 11px;
  background: linear-gradient(#666, #666) no-repeat center / 100% 1px;
}

.slider::-webkit-slider-thumb {
  appearance: none;
  width: 5px;
  height: 11px;
  background: #555;
}

.percent {
  margin-left: 10px;
}
```
FILE: script.js
```
var cols = "ABCDEFGHIJKLMNOPQRST".split("");
var heads = ["No", "氏名", "所属部門", "ビジネスマナー研修", "コンプライアンス講習", "ハラスメント防止研修", "プレゼンテーション研修"];
var people = [
  ["上野山 伸子", "営業部"],
  ["橋本 真由", "人事部"],
  ["野口 大介", "技術開発部"],
  ["安田 郁美", "人事部"],
  ["瀬古 紘司", "営業部"],
  ["松井 友美", "人事部"],
  ["清水 寿人", "営業部"],
  ["堀尾 潤", "技術開発部"],
  ["宮嶋 健二", "技術開発部"],
  ["吉田 大輔", "営業部"]
];

var thead = '<th class="corner"></th>';
for (var c = 0; c < cols.length; c++) {
  // the last column is cut off by the scroll bar
  thead += "<th" + (cols[c] === "D" ? ' class="cur"' : "") + ">" + (c < 19 ? cols[c] : "") + "</th>";
}
document.querySelector(".grid thead tr").innerHTML = thead;

var html = "";
for (var r = 1; r <= 26; r++) {
  html += "<tr><th" + (r === 3 ? ' class="cur"' : "") + ">" + r + "</th>";
  var start = 0;
  if (r === 1) {
    html += '<td class="title" colspan="5">●受講希望アンケート入力表<i>（</i>第1希望<i>「◯」</i>を1つ、第2希望<i>「△」</i>を2つまで<i>）</i></td>';
    start = 5;
  }
  for (var i = start; i < cols.length; i++) {
    var text = "";
    var cls = "";
    var person = people[r - 3];
    if (r === 2 && i < 7) {
      text = heads[i];
      cls = "head";
    } else if (person) {
      if (i === 0) {
        text = r - 2;
        cls = "num";
      }
      if (i === 1) text = person[0];
      if (i === 2) text = person[1];
      if (i === 8) text = "◯";
      if (i === 9) text = "△";
      if (i > 7 && i < 10) cls = "mark";
    }
    html += "<td" + (cls ? ' class="' + cls + '"' : "") + ">" + text + "</td>";
  }
  html += "</tr>";
}
document.querySelector(".grid tbody").innerHTML = html;
```
